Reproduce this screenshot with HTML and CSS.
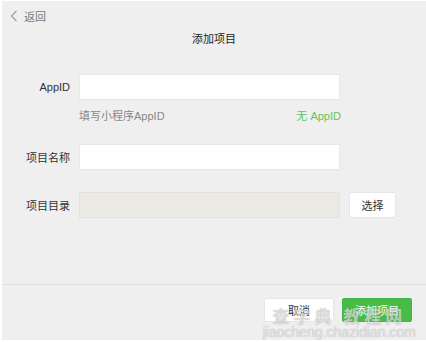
FILE: index.html
```html
<!DOCTYPE html>
<html lang="zh-CN">
<head>
<meta charset="UTF-8">
<meta name="viewport" content="width=device-width, initial-scale=1.0">
<title>添加项目</title>
<link rel="stylesheet" href="styles.css">
</head>
<body>
<div class="window">
    <div class="topbar">
        <a class="back" href="#">
            <svg width="8" height="12" viewBox="0 0 8 12"><path d="M6.5 1 L1.5 6 L6.5 11" fill="none" stroke="#9a9a9a" stroke-width="1.1"/></svg>
            <span>返回</span>
        </a>
    </div>
    <div class="title">添加项目</div>

    <div class="form">
        <div class="row">
            <label>AppID</label>
            <input class="field" type="text">
        </div>
        <div class="hint-row">
            <span class="hint">填写小程序AppID</span>
            <a class="no-appid" href="#">无 AppID</a>
        </div>
        <div class="row row-name">
            <label>项目名称</label>
            <input class="field" type="text">
        </div>
        <div class="row row-dir">
            <label>项目目录</label>
            <input class="field field-disabled" type="text" disabled>
            <button class="btn btn-pick">选择</button>
        </div>
    </div>

    <div class="footer">
        <button class="btn btn-cancel">取消</button>
        <button class="btn btn-primary">添加项目</button>
    </div>

    <!-- watermark over the corner of the screenshot -->
    <div class="watermark">
        <div class="wm-big">查字典 教程网</div>
        <div class="wm-small">jiaocheng.chazidian.com</div>
    </div>
</div>
</body>
</html>
```
FILE: styles.css
```css
body {
    margin: 0;
    font-family: "Liberation Sans", "Noto Sans CJK SC", sans-serif;
    font-size: 11px;
    color: #333;
    background-color: #fff;
}
.window {
    position: relative;
    width: 426px;
    height: 342px;
    box-sizing: border-box;
    border-left: 2px solid #fff;
    border-top: 1px solid #fff;
    border-bottom: 2px solid #fff;
    background-color: #efefef;
    display: flex;
    flex-direction: column;
    overflow: hidden;
}
.topbar {
    height: 30px;
    display: flex;
    align-items: center;
    padding-left: 8px;
}
.back {
    display: flex;
    align-items: center;
    gap: 6px;
    color: #777;
    text-decoration: none;
}
.title {
    height: 20px;
    line-height: 16px;
    text-align: center;
    color: #222;
}
.form {
    flex: 1;
    padding-top: 23px;
}
.row {
    display: grid;
    grid-template-columns: 68px 261px 47px;
    column-gap: 9px;
    align-items: center;
}
.row label {
    text-align: right;
    color: #333;
}
.field {
    height: 26px;
    box-sizing: border-box;
    border: 1px solid #e8e8e8;
    background-color: #fff;
    margin: 0;
    padding: 0 6px;
    outline: none;
}
.field-disabled {
    background-color: #eae9e4;
    border-color: #e2e1dc;
}
.hint-row {
    display: flex;
    justify-content: space-between;
    width: 262px;
    margin-left: 77px;
    margin-top: 8px;
    line-height: 16px;
}
.hint {
    color: #888;
}
.no-appid {
    color: #5cc55c;
    text-decoration: none;
}
.row-name {
    margin-top: 20px;
}
.row-dir {
    margin-top: 22px;
}
.btn {
    font-family: inherit;
    font-size: 11px;
    color: #333;
    background-color: #fff;
    border: 1px solid #e6e6e6;
    border-radius: 2px;
    margin: 0;
    padding: 0;
    cursor: pointer;
}
.btn-pick {
    height: 26px;
}
.footer {
    height: 56px;
    box-sizing: border-box;
    border-top: 1px solid #dedede;
    display: flex;
    justify-content: flex-end;
    gap: 8px;
    padding: 13px 14px 0 0;
}
.btn-cancel,
.btn-primary {
    width: 70px;
    height: 24px;
}
.btn-primary {
    background-color: #47bd47;
    border-color: #42b542;
    color: #fff;
}
.watermark {
    position: absolute;
    right: 10px;
    bottom: 0;
    text-align: center;
    color: rgba(255, 255, 255, 0.55);
    text-shadow: 0 0 1px rgba(120, 120, 120, 0.6);
    pointer-events: none;
}
.wm-big {
    font-family: "Noto Sans CJK SC", sans-serif;
    font-size: 17px;
    font-weight: bold;
    letter-spacing: 4px;
    line-height: 19px;
}
.wm-small {
    font-family: "Liberation Sans", sans-serif;
    font-size: 14px;
    line-height: 15px;
}
```
